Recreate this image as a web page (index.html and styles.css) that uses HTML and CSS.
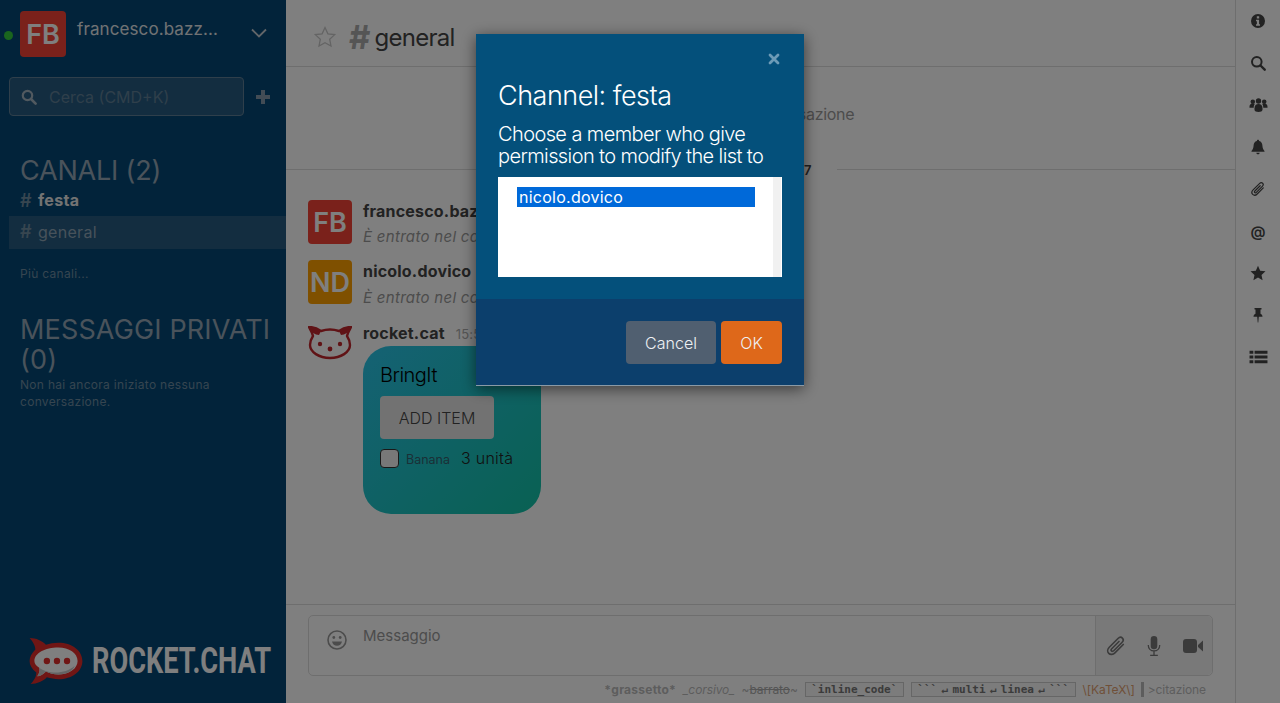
FILE: index.html
```html
<!DOCTYPE html>
<html lang="it">
<head>
  <meta charset="UTF-8">
  <meta name="viewport" content="width=device-width, initial-scale=1.0">
  <title>Rocket.Chat</title>
  <link rel="stylesheet" href="styles.css">
</head>
<body>

<svg class="sprite" width="0" height="0">
  <symbol id="clip" viewBox="0 0 20 20">
    <path d="M16.6 8.6 9 16.2c-1.7 1.7-4.2 1.9-5.6.5s-1.2-3.9.5-5.6l7.9-7.9c1.2-1.2 3-1.4 4-.4s.8 2.8-.4 4l-7.5 7.500c-.6.6-1.5.7-2 .2s-.4-1.4.2-2l6.6-6.6" fill="none" stroke="currentColor" stroke-width="1.5" stroke-linecap="round"/>
  </symbol>
</svg>

<div class="app">
  <aside class="sidebar">
    <div class="user-row">
      <span class="status-dot"></span>
      <div class="avatar avatar-red user-avatar">FB</div>
      <span class="user-name">francesco.bazz...</span>
      <svg class="chevron" viewBox="0 0 16 10"><path d="M1 1.5l7 7 7-7" fill="none" stroke="currentColor" stroke-width="1.8"/></svg>
    </div>
    <div class="search-row">
      <div class="search-box">
        <svg class="search-icon" viewBox="0 0 16 16"><circle cx="6.5" cy="6.5" r="4.7" fill="none" stroke="currentColor" stroke-width="2.2"/><path d="M10 10l4.6 4.6" stroke="currentColor" stroke-width="2.6" stroke-linecap="round"/></svg>
        <span>Cerca (CMD+K)</span>
      </div>
      <span class="add-btn"></span>
    </div>

    <div class="side-lists">
      <h2 class="side-title">CANALI (2)</h2>
      <div class="channel channel-unread"><span class="hash">#</span>festa</div>
      <div class="channel channel-active"><span class="hash">#</span>general</div>
      <p class="side-note more-link">Più canali...</p>
      <h2 class="side-title side-title-dm">MESSAGGI PRIVATI (0)</h2>
      <p class="side-note">Non hai ancora iniziato nessuna conversazione.</p>
    </div>

    <div class="side-logo">
      <svg class="logo-mark" viewBox="1 0 57 50">
        <path d="M2 1c7 0 13 3 17 7 4-1 8-2 13-2 14 0 25 8 25 19S46 44 32 44c-4 0-8-1-12-2-4 4-10 7-17 7 3-3 6-7 6-12C4 33 2 29 2 25s2-8 6-12C8 9 5 4 2 1z" fill="#e02d2a"/>
        <path d="M32 11c11 0 20 6 20 14s-9 14-20 14c-5 0-9-1-13-3-3 3-6 5-9 5 2-3 3-6 2-9-3-2-5-4-5-7 0-8 11-14 25-14z" fill="#fff"/>
        <path d="M12 32c8 6 26 8 37-2-2 6-9 9-17 9-5 0-9-1-13-3-3 3-6 5-9 5 2-3 3-6 2-9z" fill="#c9c9c9"/>
        <circle cx="20" cy="25" r="3.3" fill="#e02d2a"/><circle cx="30.500" cy="25" r="3.3" fill="#e02d2a"/><circle cx="41" cy="25" r="3.3" fill="#e02d2a"/>
      </svg>
      <span class="logo-text">ROCKET.CHAT</span>
    </div>
  </aside>

  <main class="main">
    <header class="room-header">
      <svg class="star-outline" viewBox="0 0 24 24"><path d="M12 2.500l2.900 6.300 6.800.8-5 4.700 1.300 6.800-6-3.400-6 3.400 1.300-6.800-5-4.700 6.800-.8z" fill="none" stroke="currentColor" stroke-width="1.300"/></svg>
      <span class="room-hash">#</span>
      <span class="room-name">general</span>
    </header>

    <div class="room-intro">Inizio della conversazione</div>
    <div class="date-line"><span>Marzo 27, 2017</span></div>

    <section class="messages">
      <div class="message">
        <div class="avatar avatar-red msg-avatar">FB</div>
        <div class="msg-body">
          <div class="msg-user">francesco.bazzani</div>
          <div class="msg-system">È entrato nel canale</div>
        </div>
      </div>
      <div class="message">
        <div class="avatar avatar-orange msg-avatar">ND</div>
        <div class="msg-body">
          <div class="msg-user">nicolo.dovico</div>
          <div class="msg-system">È entrato nel canale</div>
        </div>
      </div>
      <div class="message message-cat">
        <svg class="cat" viewBox="0 0 44 34">
          <path d="M4 7c-1-2-2-4-3-6 5 0 9 2 12 4 3-1 6-1.500 9-1.500s6 .5 9 1.500c3-2 7-4 12-4-1 2-2 4-3 6l-1 3c2 3 3 6 3 9 0 7-9 13-20 13S2 26 2 19c0-3 1-6 3-9z" fill="#fff" stroke="#c1272d" stroke-width="2.400" stroke-linejoin="round"/>
          <path d="M1 1c5 0 9 2 12 4l-2 4C7 9 3 6 1 1zM43 1c-5 0-9 2-12 4l2 4c4 0 8-3 10-8z" fill="#c1272d"/>
          <circle cx="12" cy="18" r="2.200" fill="#c1272d"/><circle cx="32" cy="18" r="2.200" fill="#c1272d"/><circle cx="22" cy="23" r="2.400" fill="#c1272d"/>
        </svg>
        <div class="msg-body">
          <div class="msg-user">rocket.cat <span class="msg-time">15:52</span></div>
          <div class="bring-card">
            <div class="bring-title">BringIt</div>
            <button class="bring-btn">ADD ITEM</button>
            <div class="bring-item">
              <span class="bring-check"></span>
              <span class="bring-name">Banana</span>
              <span class="bring-qty">3 unità</span>
            </div>
          </div>
        </div>
      </div>
    </section>

    <footer class="composer-wrap">
      <div class="composer">
        <svg class="emoji" viewBox="0 0 22 22"><circle cx="11" cy="11" r="9" fill="none" stroke="currentColor" stroke-width="1.600"/><circle cx="7.800" cy="8.500" r="1.400" fill="currentColor"/><circle cx="14.200" cy="8.500" r="1.400" fill="currentColor"/><path d="M6 12.500h10c-.5 2.800-2.500 4.300-5 4.300s-4.500-1.500-5-4.300z" fill="currentColor"/></svg>
        <div class="composer-input">Messaggio</div>
        <div class="composer-actions">
          <svg class="action-icon"><use href="#clip"/></svg>
          <svg class="action-icon action-mic" viewBox="0 0 20 20"><rect x="7" y="1" width="6" height="12" rx="3" fill="currentColor"/><path d="M4.800 9c0 3.200 2.200 5.500 5.200 5.500s5.200-2.300 5.200-5.500M10 14.500V18M6.500 18.500h7" fill="none" stroke="currentColor" stroke-width="1.200"/></svg>
          <svg class="action-icon action-video" viewBox="0 0 22 20"><rect x="1" y="3" width="14" height="14" rx="3" fill="currentColor"/><path d="M16 9l5-4.500v11L16 11z" fill="currentColor"/></svg>
        </div>
      </div>
      <div class="format-hints">
        <b class="hint-bold">*grassetto*</b>
        <i>_corsivo_</i>
        <span>~<s>barrato</s>~</span>
        <code class="hint-code">`inline_code`</code>
        <code class="hint-code hint-multi">``` ↵ multi ↵ linea ↵ ```</code>
        <span class="hint-katex">\[KaTeX\]</span>
        <span class="hint-quote">&gt;citazione</span>
      </div>
    </footer>
  </main>

  <nav class="toolbar">
    <div class="tool"><svg viewBox="0 0 16 16"><path fill-rule="evenodd" d="M8 1a7 7 0 1 1 0 14A7 7 0 0 1 8 1zM6.800 3.200v2.300h2.400V3.200zM6 6.800v1.500h.9v3H6v1.500h4v-1.500h-.9V6.800z" fill="currentColor"/></svg></div>
    <div class="tool"><svg viewBox="0 0 16 16"><circle cx="6.800" cy="6.800" r="4.800" fill="none" stroke="currentColor" stroke-width="2"/><path d="M10.500 10.500l4.200 4.200" stroke="currentColor" stroke-width="2.400" stroke-linecap="round"/></svg></div>
    <div class="tool tool-wide"><svg viewBox="0 0 20 16"><circle cx="4" cy="4.500" r="2.400" fill="currentColor"/><circle cx="16" cy="4.500" r="2.400" fill="currentColor"/><circle cx="10" cy="3.800" r="2.800" fill="currentColor"/><path d="M.5 10c0-2 1-3.500 3.500-3.500 1 0 1.500.3 2 .7-.8.900-1 2-1 3.300v.5H.5zM19.500 10c0-2-1-3.500-3.500-3.500-1 0-1.500.3-2 .7.800.900 1 2 1 3.300v.5h4.500z" fill="currentColor"/><path d="M5.800 11.500c0-3 1.500-4.500 4.200-4.500s4.200 1.500 4.200 4.500V13c0 1.500-2 2.300-4.200 2.300S5.800 14.500 5.800 13z" fill="currentColor"/></svg></div>
    <div class="tool"><svg viewBox="0 0 16 16"><path d="M8 .8c.7 0 1.100.5 1.100 1.100 2.300.5 3.200 2.400 3.300 4.600.1 2.800 1 4.300 2.100 5.500v.8H1.500V12c1.100-1.200 2-2.700 2.100-5.500.1-2.200 1-4.100 3.300-4.600C6.900 1.300 7.300.8 8 .8zM6.300 13.800h3.400C9.500 14.800 8.900 15.300 8 15.300s-1.500-.5-1.700-1.500z" fill="currentColor"/></svg></div>
    <div class="tool"><svg><use href="#clip"/></svg></div>
    <div class="tool tool-at">@</div>
    <div class="tool"><svg viewBox="0 0 16 16"><path d="M8 .8l2.200 4.900 5.300.6-4 3.600 1.100 5.300L8 12.500l-4.600 2.700 1.100-5.300-4-3.600 5.300-.6z" fill="currentColor"/></svg></div>
    <div class="tool"><svg viewBox="0 0 16 16"><path d="M4.500 1h7v1.500H10.500v4.200c1.300.6 2 1.700 2 3.100h-3.700l-.5 5.700h-.6l-.5-5.700H3.500c0-1.400.7-2.500 2-3.100V2.500H4.500z" fill="currentColor"/></svg></div>
    <div class="tool tool-wide"><svg viewBox="0 0 18 14"><path d="M.5 1h3.600v3H.5zM5.300 1h12.200v3H5.300zM.5 5.500h3.600v3H.5zM5.300 5.500h12.200v3H5.300zM.5 10h3.600v3H.5zM5.300 10h12.200v3H5.300z" fill="currentColor"/></svg></div>
  </nav>
</div>

<div class="overlay">
  <div class="modal">
    <div class="modal-top">
      <div class="modal-close">
        <svg viewBox="0 0 12 12"><path d="M2 2l8 8M10 2l-8 8" stroke="currentColor" stroke-width="2.800" stroke-linecap="round"/></svg>
      </div>
      <h3 class="modal-title">Channel: festa</h3>
      <p class="modal-text">Choose a member who give permission to modify the list to</p>
      <div class="member-list">
        <div class="member-options">
          <div class="member-selected">nicolo.dovico</div>
        </div>
        <div class="member-scroll"></div>
      </div>
    </div>
    <div class="modal-bottom">
      <button class="btn btn-cancel">Cancel</button>
      <button class="btn btn-ok">OK</button>
    </div>
  </div>
</div>

</body>
</html>
```

FILE: styles.css
```css
* {
  box-sizing: border-box;
}
html, body {
  margin: 0;
  height: 100%;
  overflow: hidden;
}
body {
  font-family: Inter, "Noto Sans", sans-serif;
  color: #444;
  background-color: #fff;
}
.sprite {
  display: block;
}
.app {
  display: flex;
  height: 703px;
}

/* sidebar */
.sidebar {
  width: 286px;
  flex: none;
  display: flex;
  flex-direction: column;
  background-color: #044674;
  color: #9ea2a4;
}
.user-row {
  height: 77px;
  display: flex;
  align-items: flex-start;
  padding: 11px 0 0 4px;
}
.status-dot {
  width: 9px;
  height: 9px;
  margin: 20px 7px 0 0;
  border-radius: 50%;
  background-color: #35ca3c;
}
.avatar {
  display: flex;
  align-items: center;
  justify-content: center;
  flex: none;
  border-radius: 4px;
  color: #fff;
  font-weight: 600;
}
.avatar-red {
  background-color: #f44336;
}
.avatar-orange {
  background-color: #ffa000;
}
.user-avatar {
  width: 46px;
  height: 46px;
  font-size: 27px;
}
.user-name {
  width: 179px;
  margin: 8px 0 0 11px;
  font-size: 17px;
  line-height: 20px;
  letter-spacing: .1px;
  color: #e1e5e8;
  white-space: nowrap;
}
.chevron {
  width: 16px;
  height: 10px;
  margin: 17px 0 0 -5px;
  color: #c5ccd2;
}
.search-row {
  display: flex;
  align-items: center;
  height: 39px;
  padding-left: 9px;
}
.search-box {
  width: 235px;
  height: 39px;
  display: flex;
  align-items: center;
  gap: 12px;
  padding-left: 11px;
  border: 1px solid #5f7f96;
  border-radius: 4px;
  background-color: #275a80;
  font-size: 16px;
  color: #5e7f96;
}
.search-icon {
  width: 16px;
  height: 16px;
  color: #a3b3bf;
}
.add-btn {
  width: 14px;
  height: 14px;
  margin-left: 12px;
  background:
    linear-gradient(#8499aa, #8499aa) center / 14px 4px no-repeat,
    linear-gradient(#8499aa, #8499aa) center / 4px 14px no-repeat;
}
.side-lists {
  flex: 1;
  padding: 39px 0 0 9px;
}
.side-title {
  margin: 0 0 0 11px;
  font-size: 27px;
  line-height: 32px;
  font-weight: 400;
  letter-spacing: -.2px;
  color: #94a7b6;
}
.channel {
  display: flex;
  align-items: center;
  height: 33px;
  padding-left: 11px;
  font-size: 16px;
  letter-spacing: .3px;
  color: #8ea5b6;
}
.hash {
  width: 18px;
  font-size: 18px;
  font-weight: 600;
  color: #6f8ca1;
}
.channel-unread {
  height: 26px;
  margin-bottom: 3px;
  font-weight: 700;
  color: #e6e6e6;
}
.channel-active {
  padding-bottom: 2px;
  background-color: #275a80;
}
.side-note {
  margin: 0 0 0 11px;
  font-size: 12px;
  line-height: 17px;
  letter-spacing: .3px;
  color: #6c8ba1;
}
.more-link {
  margin-top: 16px;
}
.side-title-dm {
  margin-top: 33px;
  margin-bottom: 1px;
  line-height: 30px;
  letter-spacing: .15px;
}
.side-logo {
  height: 78px;
  flex: none;
  display: flex;
  align-items: center;
  padding: 0 0 7px 28px;
}
.logo-mark {
  width: 56px;
  height: 48px;
  flex: none;
}
.logo-text {
  margin-left: 8px;
  font-family: Roboto, sans-serif;
  font-size: 37px;
  font-weight: 700;
  color: #fff;
  transform: scaleX(.735);
  transform-origin: left center;
  white-space: nowrap;
}

/* room */
.main {
  flex: 1;
  min-width: 0;
  display: flex;
  flex-direction: column;
}
.room-header {
  height: 67px;
  flex: none;
  display: flex;
  align-items: center;
  padding: 7px 0 0 27px;
  border-bottom: 1px solid #ddd;
}
.star-outline {
  width: 24px;
  height: 24px;
  color: #c8c8c8;
}
.room-hash {
  margin-left: 12px;
  font-size: 33px;
  font-weight: 700;
  color: #aaa;
}
.room-name {
  margin: 2px 0 0 4px;
  font-size: 24px;
  letter-spacing: -.7px;
  color: #444;
}
.room-intro {
  height: 102px;
  flex: none;
  padding-top: 37px;
  text-align: center;
  font-size: 16px;
  line-height: 20px;
  letter-spacing: -.3px;
  color: #999;
}
.date-line {
  height: 1px;
  flex: none;
  display: flex;
  align-items: center;
  justify-content: center;
  background-color: #ddd;
}
.date-line span {
  padding: 0 25px;
  background-color: #fff;
  font-size: 13px;
  font-weight: 600;
  letter-spacing: .7px;
  color: #444;
}
.messages {
  flex: 1;
  padding: 30px 22px 0;
}
.message {
  display: flex;
  gap: 11px;
  height: 60px;
}
.message-cat {
  height: auto;
  margin-top: 5px;
}
.msg-avatar {
  width: 44px;
  height: 44px;
  font-size: 27px;
}
.cat {
  width: 44px;
  height: 34px;
  margin-top: 1px;
  flex: none;
}
.msg-user {
  font-size: 16px;
  line-height: 22px;
  font-weight: 700;
  letter-spacing: .2px;
  color: #444;
}
.msg-time {
  margin-left: 7px;
  font-size: 13px;
  font-weight: 400;
  color: #aaa;
}
.msg-system {
  margin-top: 4px;
  font-size: 15px;
  line-height: 22px;
  font-style: italic;
  letter-spacing: .3px;
  color: #999;
}
.message + .message .msg-system {
  margin-top: 5px;
}
.message-cat .msg-user {
  margin-top: -3px;
}
.bring-card {
  width: 178px;
  height: 168px;
  margin-top: 1px;
  padding: 17px;
  border-radius: 28px;
  color: #000;
  background: linear-gradient(135deg, #2ac4e8, #12c2a6);
}
.bring-title {
  font-size: 20px;
  line-height: 24px;
  font-weight: 300;
  letter-spacing: -.5px;
}
.bring-btn {
  display: block;
  width: 114px;
  height: 43px;
  margin-top: 9px;
  padding: 0;
  border: none;
  border-radius: 4px;
  background-color: #e4e4e4;
  font-family: inherit;
  font-size: 16px;
  font-weight: 300;
  color: #444;
}
.bring-item {
  display: flex;
  align-items: center;
  height: 19px;
  margin-top: 10px;
}
.bring-check {
  width: 19px;
  height: 19px;
  border: 1px solid #333;
  border-radius: 4px;
  background-color: #f0f0f0;
}
.bring-name {
  margin: 2px 0 0 7px;
  font-size: 12.5px;
  color: #35606e;
}
.bring-qty {
  margin: -1px 0 0 11px;
  font-size: 16px;
  font-weight: 300;
  letter-spacing: .25px;
  color: #222;
}

/* composer */
.composer-wrap {
  flex: none;
  height: 99px;
  padding: 10px 22px 0;
  border-top: 1px solid #ddd;
}
.composer {
  display: flex;
  height: 61px;
  border: 1px solid #ddd;
  border-radius: 5px;
}
.emoji {
  width: 22px;
  height: 22px;
  margin: 13px 0 0 17px;
  color: #999;
}
.composer-input {
  flex: 1;
  padding: 11px 0 0 15px;
  font-size: 15px;
  line-height: 18px;
  color: #999;
}
.composer-actions {
  display: flex;
  align-items: center;
  gap: 16px;
  width: 117px;
  padding-left: 9px;
  border-left: 1px solid #ddd;
  border-radius: 0 5px 5px 0;
  background-color: #f2f2f2;
  color: #777;
}
.action-icon {
  width: 22px;
  height: 22px;
}
.action-video {
  margin-left: 1px;
}
.format-hints {
  display: flex;
  justify-content: flex-end;
  align-items: center;
  gap: 7px;
  height: 20px;
  margin-top: 3px;
  padding-right: 7px;
  font-size: 12px;
  letter-spacing: -.1px;
  color: #bbb;
  white-space: nowrap;
}
.format-hints s {
  color: #aaa;
}
.hint-bold {
  letter-spacing: .25px;
}
.hint-code {
  padding: 0 5.5px;
  border: 1px solid #ccc;
  background-color: #f8f8f8;
  font-family: "DejaVu Sans Mono", monospace;
  font-size: 11px;
  font-weight: 700;
  letter-spacing: 0;
  color: #777;
}
.hint-multi {
  word-spacing: -2.300px;
}
.hint-katex {
  color: #e0a070;
}
.hint-quote {
  margin-left: -1px;
  padding-left: 4px;
  border-left: 3px solid #bbb;
}

/* right toolbar */
.toolbar {
  width: 45px;
  flex: none;
  border-left: 1px solid #ddd;
}
.tool {
  height: 42px;
  display: flex;
  align-items: center;
  justify-content: center;
  color: #444;
}
.tool svg {
  width: 16px;
  height: 16px;
}
.tool-wide svg {
  width: 19px;
}
.tool-at {
  font-size: 15px;
  font-weight: 600;
}

/* modal */
.overlay {
  position: fixed;
  top: 0;
  left: 0;
  right: 0;
  bottom: 0;
  display: flex;
  justify-content: center;
  align-items: flex-start;
  padding-top: 34px;
  background-color: rgba(0, 0, 0, .5);
}
.modal {
  width: 328px;
  height: 352px;
  display: flex;
  flex-direction: column;
  color: #fff;
  box-shadow: 0 3px 14px rgba(0, 0, 0, .55);
}
.modal-top {
  position: relative;
  height: 265px;
  padding: 47px 22px 0;
  background-color: #04507b;
}
.modal-close {
  position: absolute;
  top: 19px;
  right: 24px;
  width: 12px;
  height: 12px;
  color: #6d9bb7;
}
.modal-close svg {
  display: block;
}
.modal-title {
  margin: 0;
  font-size: 27px;
  line-height: 30px;
  font-weight: 300;
  letter-spacing: -.5px;
}
.modal-text {
  margin: 12px 0 0;
  font-size: 20px;
  line-height: 22px;
  font-weight: 300;
  letter-spacing: -.6px;
}
.member-list {
  display: flex;
  height: 100px;
  margin-top: 10px;
  background-color: #fff;
}
.member-options {
  flex: 1;
  padding: 10px 18px 0 19px;
}
.member-selected {
  height: 20px;
  padding-left: 2px;
  background-color: #0069d9;
  font-size: 16px;
  line-height: 20px;
  letter-spacing: .25px;
}
.member-scroll {
  width: 8px;
  margin-right: 1px;
  background-color: #f1f1f1;
}
.modal-bottom {
  flex: 1;
  display: flex;
  justify-content: flex-end;
  gap: 5px;
  padding: 22px 22px 0;
  background-color: #0c3f6c;
  border-bottom: 1px solid #8a9aa6;
}
.btn {
  height: 43px;
  padding: 0;
  border: none;
  border-radius: 4px;
  font-family: inherit;
  font-size: 16px;
  font-weight: 300;
  color: #eef1f4;
}
.btn-cancel {
  width: 90px;
  background-color: #505f70;
}
.btn-ok {
  width: 61px;
  background-color: #de681a;
}
```
